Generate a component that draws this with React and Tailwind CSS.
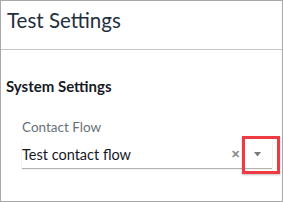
export default function App() {
  return (
    <div className="w-[283px] h-[202px] border border-[#a8a8a8] bg-white font-['Lato',sans-serif] text-[#16191f] overflow-hidden">
      <div className="h-[49px] border-b border-[#c6c6c6] pl-[6px] pt-[7px]">
        <div className="text-[20.5px] leading-[24px] text-[#232f3e]">Test Settings</div>
      </div>
      <div className="pl-[5px] pt-[27px]">
        <div className="text-[15px] leading-[18px] font-bold text-[#16191f]">System Settings</div>
        <div className="pl-[16px] pt-[23px]">
          <div className="text-[13.5px] leading-[18px] text-[#687078]">Contact Flow</div>
          <div className="relative mt-[5px] w-[250px] h-[27px] flex items-center bg-white shadow-[0_1px_1px_rgba(0,0,0,0.3)]">
            <span className="flex-1 pt-[1px] text-[14.5px] leading-[20px] text-[#16191f]">Test contact flow</span>
            <span className="w-[14px] text-center text-[11px] font-bold text-[#8a8a8a]">✕</span>
            <span className="w-[30px] flex justify-center">
              <svg width="7" height="5" viewBox="0 0 7 5"><path d="M0 0h7L3.5 4.5z" fill="#7a7a7a" /></svg>
            </span>
            <div className="absolute left-[220px] top-[-5px] w-[38px] h-[38px] border-[3px] border-[#ee3b43] shadow-[0_1px_2px_rgba(0,0,0,0.25)]" />
          </div>
        </div>
      </div>
    </div>
  );
}
